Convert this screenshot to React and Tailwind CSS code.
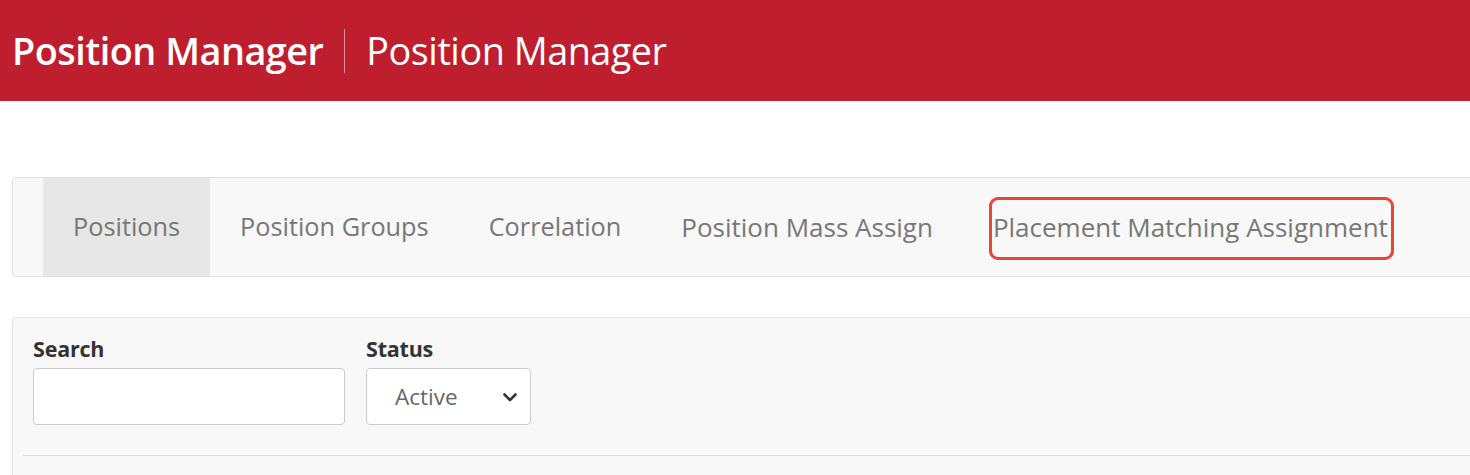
import React from "react";

export default function App() {
  const tabs = [
    "Positions",
    "Position Groups",
    "Correlation",
    "Position Mass Assign",
    "Placement Matching Assignment",
  ];
  return (
    <div
      className="w-[1470px] h-[475px] overflow-hidden bg-white"
      style={{ fontFamily: '"Open Sans", "Noto Sans", sans-serif' }}
    >
      <header className="h-[101px] bg-[#be1e2d] flex items-center pl-[12px] text-white">
        <span className="text-[37.8px] font-semibold tracking-[-0.5px] leading-none">Position Manager</span>
        <span className="w-px h-[44px] bg-white/50 mx-[21px]" />
        <span className="text-[37.8px] font-normal tracking-[-0.5px] leading-none">Position Manager</span>
      </header>

      <nav className="mt-[76px] ml-[12px] mr-[-20px] h-[100px] border border-[#e1e1e1] rounded-[4px] bg-[#f8f8f8] pl-[30px] flex">
        {tabs.map((t, i) => (
          <div
            key={t}
            className={
              "h-full flex items-center px-[30px] text-[#777777] " +
              (i >= 3 ? "text-[26px] " : "text-[25.3px] ") +
              (i === 0 ? "bg-[#e7e7e7] text-[#555555]" : "")
            }
          >
            {i === 4 ? (
              <span className="relative">
                {t}
                <span className="absolute left-[-4px] right-[-6px] top-[-11px] bottom-[-13px] border-[3px] border-[#e2483a] rounded-[9px]" />
              </span>
            ) : (
              t
            )}
          </div>
        ))}
      </nav>

      <section className="mt-[40px] ml-[12px] mr-[-20px] h-[200px] border border-[#e1e1e1] rounded-[4px] bg-[#f8f8f9] px-[10px] pt-[16px]">
        <div className="flex gap-[21px] px-[10px]">
          <div className="flex flex-col">
            <label className="text-[21.5px] font-bold text-[#333333] leading-[30px] tracking-[-0.2px]">Search</label>
            <div className="mt-[4px] w-[312px] h-[57px] bg-white border border-[#cccccc] rounded-[4px]" />
          </div>
          <div className="flex flex-col">
            <label className="text-[21.5px] font-bold text-[#333333] leading-[30px] tracking-[-0.2px]">Status</label>
            <div className="mt-[4px] w-[165px] h-[57px] bg-white border border-[#cccccc] rounded-[4px] flex items-center pl-[28px] pr-[10px] justify-between">
              <span className="text-[22.5px] text-[#666666]">Active</span>
              <svg width="16" height="16" viewBox="0 0 16 16" className="mr-[2px]">
                <path d="M2.5 5.5 L8 11 L13.5 5.5" fill="none" stroke="#333" strokeWidth="2.6" strokeLinecap="round" strokeLinejoin="round" />
              </svg>
            </div>
          </div>
        </div>
        <div className="mt-[30px] h-px bg-[#dddddd]" />
      </section>
    </div>
  );
}
